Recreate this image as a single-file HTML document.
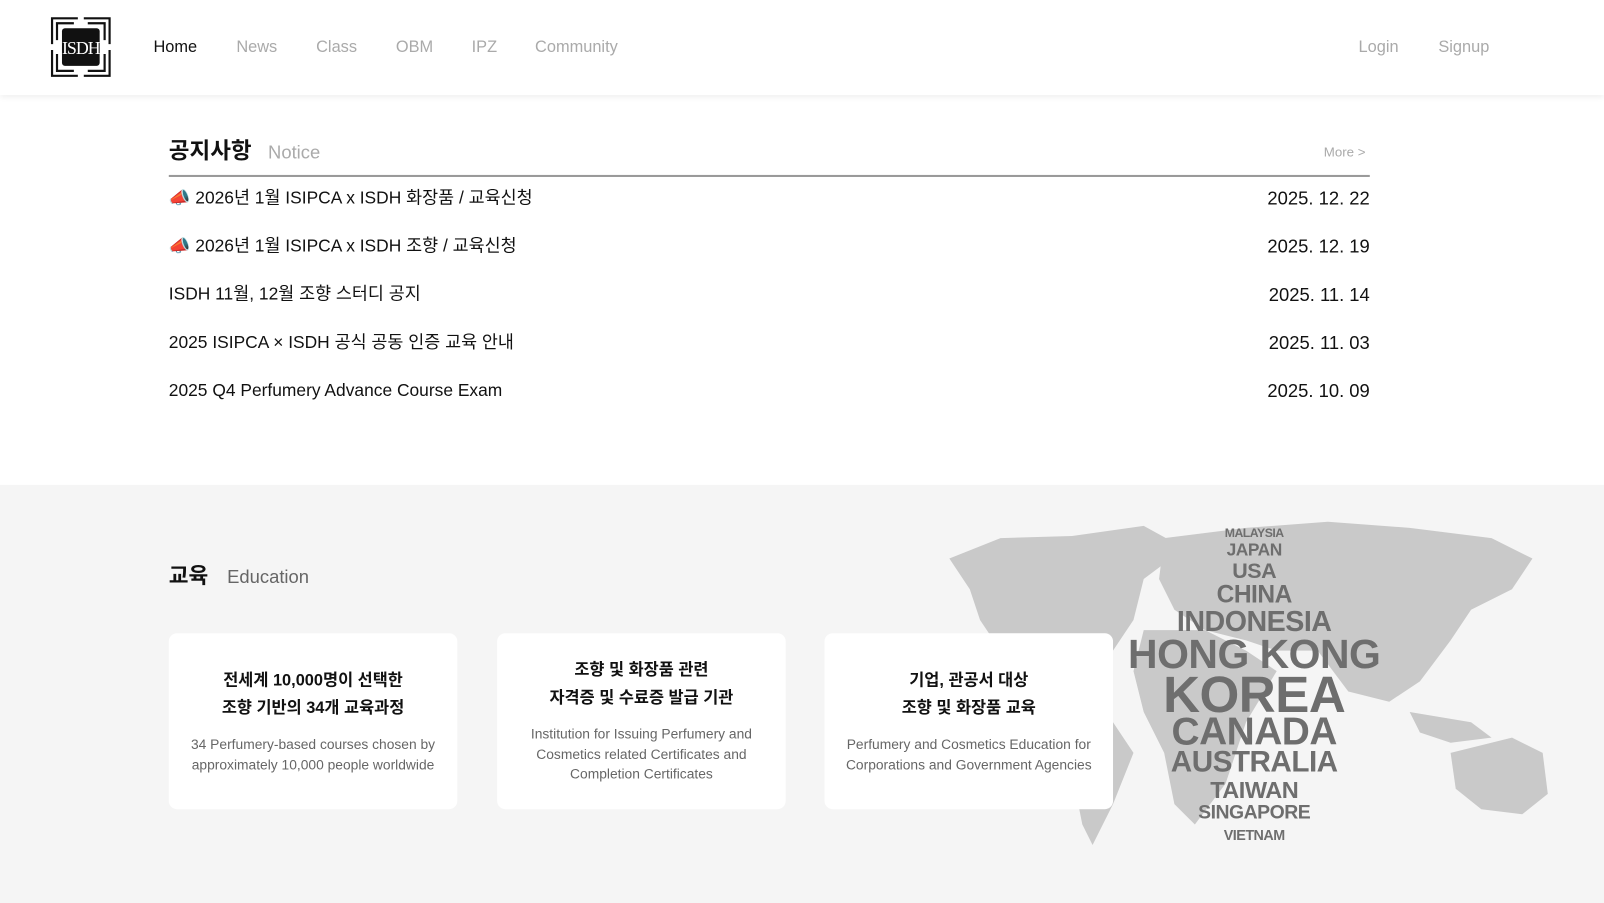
<!DOCTYPE html>
<html><head><meta charset="utf-8"><style>
*{margin:0;padding:0;box-sizing:border-box}
body{width:1604px;height:883px;overflow:hidden;font-family:"Liberation Sans","Noto Sans CJK KR",sans-serif;background:#f5f5f5;position:relative;color:#111}
#wrap{position:absolute;left:0;top:0;width:1568px;height:863px;transform:scale(1.023);transform-origin:0 0;background:#fff}
.hdr{position:absolute;left:0;top:0;width:1568px;height:93px;background:#fff;box-shadow:0 2px 6px rgba(0,0,0,.08);z-index:2}
.nav{position:absolute;top:37px;font-size:16px;line-height:20px;color:#aaa}
.sec2{position:absolute;left:0;top:474px;width:1568px;height:409px;background:#f5f5f5}
.t{position:absolute;white-space:nowrap}
.row{position:absolute;left:165px;width:1174px;font-size:17px;line-height:22px;color:#111}
.row .d{position:absolute;right:0;top:0;font-size:18px}
.card{position:absolute;top:619px;width:282px;height:172px;background:#fff;border-radius:8px;text-align:center;z-index:1}
.card h3{font-size:16px;font-weight:700;line-height:27px}
.card p{font-size:13.5px;color:#666;line-height:19.5px;margin-top:12px}
.w{position:absolute;left:0;width:100%;text-align:center;font-weight:700;color:#6e6e6e;letter-spacing:-0.5px;white-space:nowrap}
</style></head><body><div id="wrap">
<div class="hdr">
<svg style="position:absolute;left:47px;top:14px" width="64" height="64" viewBox="0 0 66 66">
<g fill="none" stroke="#111" stroke-width="2.2">
<path d="M4 30V4h26M36 4h26v26M62 36v26H36M30 62H4V36"/>
<path d="M9 26V9h17M40 9h17v17M57 40v17H40M26 57H9V40"/>
</g>
<rect x="14" y="14" width="38" height="38" rx="3" fill="#111"/>
<text x="33" y="40" text-anchor="middle" fill="#fff" font-size="18" font-family="Liberation Serif" letter-spacing="-1">ISDH</text>
</svg>
<div class="nav" style="left:150px;color:#111">Home</div>
<div class="nav" style="left:231px">News</div>
<div class="nav" style="left:309px">Class</div>
<div class="nav" style="left:387px">OBM</div>
<div class="nav" style="left:461px">IPZ</div>
<div class="nav" style="left:523px">Community</div>
<div class="nav" style="left:1328px">Login</div>
<div class="nav" style="left:1406px">Signup</div>
</div>

<div class="t" style="left:165px;top:134px;font-size:22px;line-height:28px;font-weight:700">공지사항</div>
<div class="t" style="left:262px;top:138px;font-size:18px;line-height:22px;color:#aaa">Notice</div>
<div class="t" style="left:1294px;top:141px;font-size:13px;line-height:16px;color:#aaa">More &gt;</div>
<div style="position:absolute;left:165px;top:171px;width:1174px;height:2px;background:#999"></div>
<div class="row" style="top:183px">📣 2026년 1월 ISIPCA x ISDH 화장품 / 교육신청<span class="d">2025. 12. 22</span></div>
<div class="row" style="top:230px">📣 2026년 1월 ISIPCA x ISDH 조향 / 교육신청<span class="d">2025. 12. 19</span></div>
<div class="row" style="top:277px">ISDH 11월, 12월 조향 스터디 공지<span class="d">2025. 11. 14</span></div>
<div class="row" style="top:324px">2025 ISIPCA × ISDH 공식 공동 인증 교육 안내<span class="d">2025. 11. 03</span></div>
<div class="row" style="top:371px">2025 Q4 Perfumery Advance Course Exam<span class="d">2025. 10. 09</span></div>

<div class="sec2">
<svg style="position:absolute;left:918px;top:32px" width="640" height="330" viewBox="0 0 640 330" fill="#c9c9c9">
<path d="M10 40L60 20 130 18 200 8 240 30 200 60 190 100 170 130 150 150 120 170 100 190 80 170 60 130 40 100 30 70Z"/>
<path d="M120 190L170 200 190 230 170 280 150 320 140 300 130 250 118 210Z"/>
<path d="M220 20L300 10 380 4 460 10 540 20 580 40 560 70 520 90 500 120 470 160 440 180 400 170 370 130 330 130 300 120 260 110 230 90 215 60Z"/>
<path d="M200 110L260 110 300 130 330 150 300 200 280 260 250 300 230 280 220 230 200 190 190 150Z"/>
<path d="M500 230L560 215 590 230 595 270 570 290 530 285 505 265Z"/>
<path d="M460 190L520 200 540 215 500 220 470 210Z"/>
</svg>
<div style="position:absolute;left:1086px;top:40px;width:280px;height:340px">
<div class="w" style="top:0px;font-size:12px">MALAYSIA</div>
<div class="w" style="top:14px;font-size:17px">JAPAN</div>
<div class="w" style="top:33px;font-size:21px">USA</div>
<div class="w" style="top:54px;font-size:24px">CHINA</div>
<div class="w" style="top:78px;font-size:28px">INDONESIA</div>
<div class="w" style="top:104px;font-size:40px">HONG KONG</div>
<div class="w" style="top:136px;font-size:50px">KOREA</div>
<div class="w" style="top:181px;font-size:38px">CANADA</div>
<div class="w" style="top:215px;font-size:29px">AUSTRALIA</div>
<div class="w" style="top:245px;font-size:23px">TAIWAN</div>
<div class="w" style="top:270px;font-size:19px">SINGAPORE</div>
<div class="w" style="top:294px;font-size:14px">VIETNAM</div>
</div>
<div class="t" style="left:165px;top:76px;font-size:21px;line-height:28px;font-weight:700">교육</div>
<div class="t" style="left:222px;top:79px;font-size:18px;line-height:22px;color:#666">Education</div>
</div>

<div class="card" style="left:165px;padding-top:33px"><h3>전세계 10,000명이 선택한<br>조향 기반의 34개 교육과정</h3><p>34 Perfumery-based courses chosen by<br>approximately 10,000 people worldwide</p></div>
<div class="card" style="left:486px;padding-top:23px"><h3>조향 및 화장품 관련<br>자격증 및 수료증 발급 기관</h3><p>Institution for Issuing Perfumery and<br>Cosmetics related Certificates and<br>Completion Certificates</p></div>
<div class="card" style="left:806px;padding-top:33px"><h3>기업, 관공서 대상<br>조향 및 화장품 교육</h3><p>Perfumery and Cosmetics Education for<br>Corporations and Government Agencies</p></div>
</div></body></html>
